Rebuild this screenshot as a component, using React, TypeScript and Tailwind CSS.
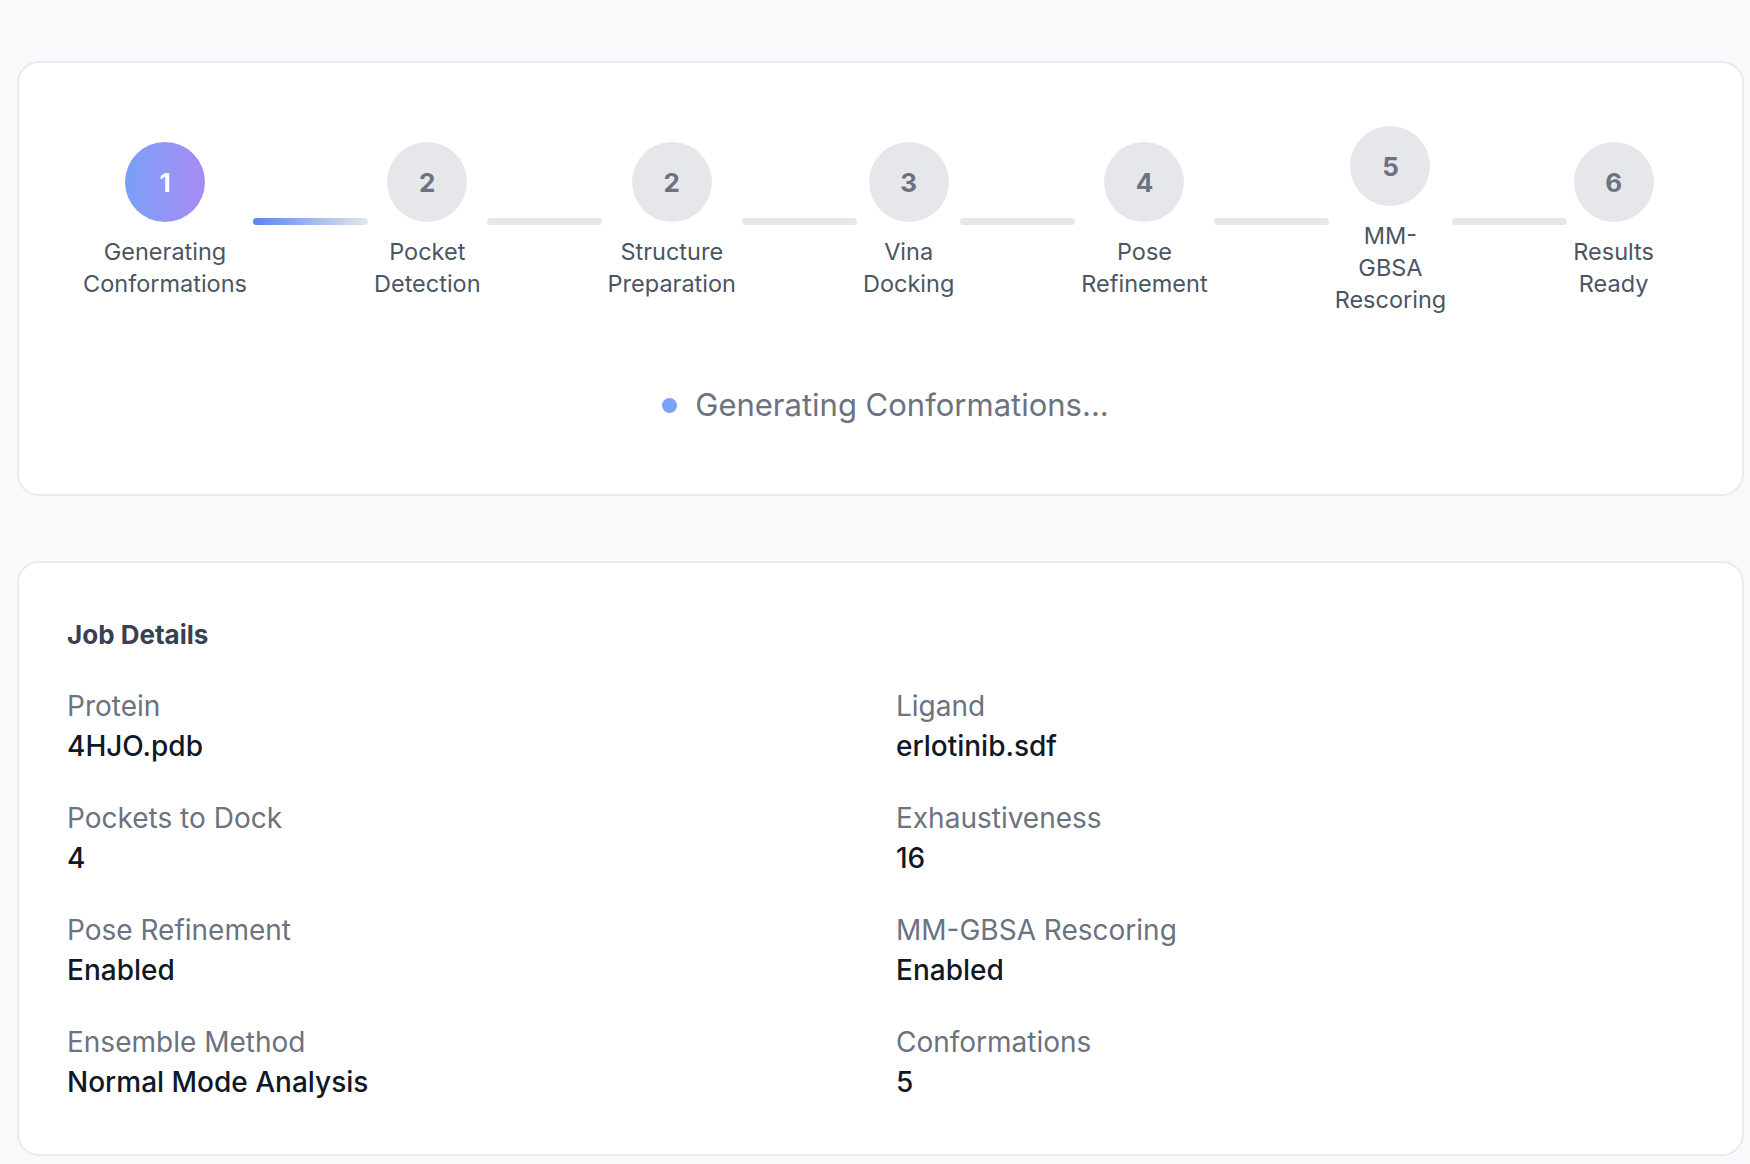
import React from "react";

const steps = [
  { n: "1", label: "Generating Conformations", active: true },
  { n: "2", label: "Pocket Detection" },
  { n: "2", label: "Structure Preparation" },
  { n: "3", label: "Vina Docking" },
  { n: "4", label: "Pose Refinement" },
  { n: "5", label: "MM-GBSA Rescoring" },
  { n: "6", label: "Results Ready" },
];

const details = [
  ["Protein", "4HJO.pdb"],
  ["Ligand", "erlotinib.sdf"],
  ["Pockets to Dock", "4"],
  ["Exhaustiveness", "16"],
  ["Pose Refinement", "Enabled"],
  ["MM-GBSA Rescoring", "Enabled"],
  ["Ensemble Method", "Normal Mode Analysis"],
  ["Conformations", "5"],
];

export default function App() {
  return (
    <div
      className="min-h-[1164px] w-[1750px] overflow-hidden bg-[#f8f9fb] pt-[61px]"
      style={{ fontFamily: "Inter, 'Noto Sans', sans-serif" }}
    >
      <div className="ml-[17px] w-[1727px] rounded-[22px] border-2 border-[#e8eaee] bg-white pt-[63px] pb-[70px]">
        <div className="flex items-center gap-[6px] pl-[64px]">
          {steps.map((s, i) => (
            <React.Fragment key={i}>
              {i > 0 && (
                <div
                  className={
                    "h-[7px] w-[115px] shrink-0 rounded-full " +
                    (i === 1 ? "bg-gradient-to-r from-[#5a83ef] to-[#e5e7eb]" : "bg-[#e5e7eb]")
                  }
                />
              )}
              <div className="flex w-min flex-col items-center">
                <div
                  className={
                    "flex h-[80px] w-[80px] items-center justify-center rounded-full text-[26px] font-bold " +
                    (s.active
                      ? "bg-gradient-to-r from-[#78a0f6] to-[#a78bf4] text-white"
                      : "bg-[#e5e7eb] text-[#6b7280]")
                  }
                >
                  {s.n}
                </div>
                <div className="mt-[14px] text-center text-[23.5px] leading-[32px] text-[#4b5563]">
                  {s.label}
                </div>
              </div>
            </React.Fragment>
          ))}
        </div>
        <div className="mt-[70px] flex items-center justify-center gap-[18px] pl-[10px]">
          <span className="h-[15px] w-[15px] rounded-full bg-[#7aa2f7]" />
          <span className="text-[31px] leading-[38px] text-[#6b7280]">Generating Conformations...</span>
        </div>
      </div>

      <div className="mt-[65px] ml-[17px] w-[1727px] rounded-[22px] border-2 border-[#e8eaee] bg-white px-[48px] pt-[55px] pb-[52px]">
        <h2 className="text-[26px] font-bold leading-[34px] text-[#374151]">Job Details</h2>
        <div className="mt-[34px] grid grid-cols-[829px_1fr] gap-y-[32px]">
          {details.map(([k, v]) => (
            <div key={k}>
              <div className="text-[28px] leading-[40px] text-[#6b7280]">{k}</div>
              <div className="text-[28px] font-medium leading-[40px] text-[#111827]">{v}</div>
            </div>
          ))}
        </div>
      </div>
    </div>
  );
}
